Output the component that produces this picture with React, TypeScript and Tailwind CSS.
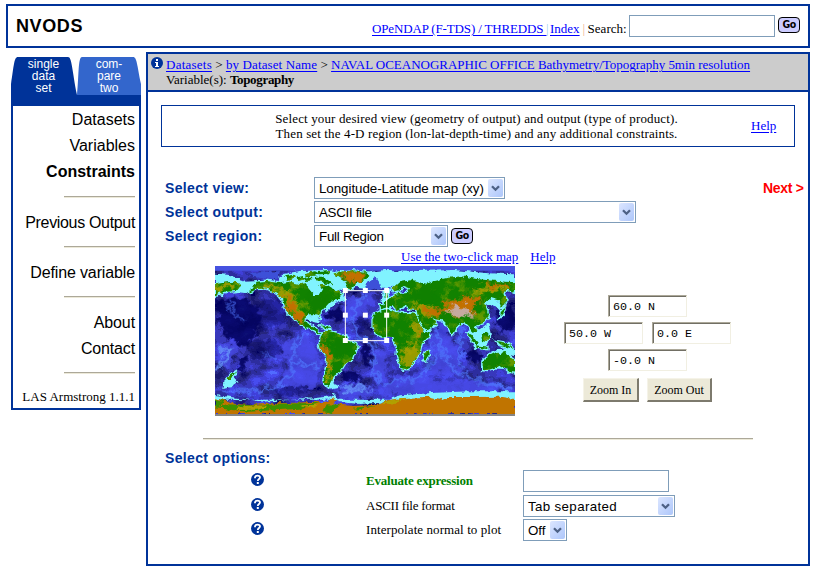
import React from "react";

const serif = "font-['Liberation_Serif',serif]";
const sans = "font-['Liberation_Sans',sans-serif]";
const link = "text-[#0000ff] underline underline-offset-2";

function Chevron() {
  return (
    <svg width="9" height="7" viewBox="0 0 9 7">
      <path d="M1 1.2L4.5 4.7 8 1.2" fill="none" stroke="#4d6185" strokeWidth="2.3" />
    </svg>
  );
}

function Select({ label, className }: { label: string; className: string }) {
  return (
    <div className={`${sans} flex h-[22px] shrink-0 items-center justify-between border border-[#7f9db9] bg-white pr-px pl-1 text-[13.33px] whitespace-nowrap ${className}`}>
      <span className="pt-[2px]">{label}</span>
      <span className="flex h-[18px] w-[15px] shrink-0 items-center justify-center rounded-[2px] bg-linear-to-br from-[#dce6ff] to-[#adc6fa]">
        <Chevron />
      </span>
    </div>
  );
}

function Go() {
  return (
    <button className="flex h-4 w-[22px] shrink-0 items-center justify-center rounded-[4px] border border-black bg-[#ccccff] pb-px font-['DejaVu_Sans_Condensed','DejaVu_Sans',sans-serif] text-[10.5px] leading-none font-bold tracking-[-0.5px]">
      Go
    </button>
  );
}

function Rule({ className }: { className: string }) {
  return <div className={`h-[2px] shrink-0 border-t border-b border-t-[#aca899] border-b-[#ece9d8] ${className}`} />;
}

function InfoIcon() {
  return (
    <svg width="12" height="12" viewBox="0 0 12 12" className="shrink-0">
      <circle cx="6" cy="6" r="6" fill="#003399" />
      <path d="M5 2h2v2H5zM4 5h3v4h1v1H4V9h1V6H4z" fill="#fff" />
    </svg>
  );
}

function QuestionIcon() {
  return (
    <svg width="13" height="13" viewBox="0 0 13 13" className="mb-[3px] shrink-0">
      <circle cx="6.5" cy="6.5" r="6.5" fill="#003399" />
      <path d="M4 5.2V4.6C4 3.2 5 2.7 6.5 2.7S9 3.3 9 4.6C9 6 6.8 6 6.8 7.9" fill="none" stroke="#fff" strokeWidth="1.8" />
      <path d="M5.8 9h2v2h-2z" fill="#fff" />
    </svg>
  );
}

function Coord({ value }: { value: string }) {
  return (
    <div className="h-[22px] w-[79px] border border-t-[#aca899] border-r-[#f1efe2] border-b-[#f1efe2] border-l-[#aca899] bg-white">
      <div className="h-full border-t border-l border-[#716f64] pl-[3px] font-['Liberation_Mono',monospace] text-[11.67px] leading-[20px] whitespace-pre">{value}</div>
    </div>
  );
}

function ZoomButton({ label, className }: { label: string; className: string }) {
  return (
    <button className={`${serif} h-6 border-t border-r-2 border-b-2 border-l border-t-[#f5f3e8] border-r-[#7d7a6d] border-b-[#7d7a6d] border-l-[#f5f3e8] bg-[#ece9d8] pt-px text-[12px] leading-[21px] whitespace-nowrap ${className}`}>
      {label}
    </button>
  );
}

const land = [
  "M15 118 L50 112 80 110 92 122 80 138 45 140 38 150 25 145 15 152Z",
  "M140 110 L170 108 210 115 240 110 270 118 292 114 295 130 312 150 328 150 338 133 330 118 350 116 368 128 395 145 385 162 362 168 347 185 332 200 330 216 322 208 300 208 288 212 286 230 302 241 315 246 328 262 342 264 338 270 320 262 300 250 280 245 262 232 240 208 222 190 218 165 205 150 185 137 165 130 140 132 110 145 128 128Z",
  "M222 94l25-5 8 8-20 8zM258 97l20-4 5 10-18 5zM287 84l28-5 12 6-15 7-26 2zM280 98l22-3 8 10-22 3zM315 95l20 0 22 12 15 14-24-5-15-12-18-2zM325 81l35-3-10 9-22 1z",
  "M372 86 L395 80 430 76 465 80 478 92 470 104 445 113 434 124 424 136 413 130 402 106 388 97Z",
  "M338 262 L355 257 380 265 410 275 412 290 442 297 442 310 430 330 424 346 405 356 394 374 380 386 370 400 362 410 357 426 343 420 341 400 348 370 352 338 335 317 328 297 332 280Z",
  "M328 241l26 4 10 7-20-3zM50 402l12-13 15-9-2 9-16 13z",
  "M495 205 L510 198 540 195 556 201 575 205 600 204 617 208 622 217 635 245 646 262 661 258 655 275 635 296 631 315 626 330 614 345 605 365 590 375 575 372 568 350 560 330 562 310 550 290 548 275 520 275 500 270 488 250 488 225Z",
  "M640 326l15-8 1 15-11 17-7-5z",
  "M508 178 L526 178 528 168 545 156 562 148 592 144 600 130 580 122 568 138 555 141 548 131 570 112 600 106 625 112 650 116 672 108 710 99 755 94 800 102 850 107 915 112 915 140 888 134 880 146 889 168 876 190 867 166 845 160 822 175 829 190 836 213 820 234 796 242 802 260 786 263 776 246 762 230 742 240 732 260 725 268 713 242 696 226 675 223 662 215 678 236 650 256 640 245 624 215 620 195 600 192 588 180 560 195 547 180 532 190 510 196Z",
  "M818 350 L830 335 850 325 865 320 874 330 884 318 896 332 915 345 915 378 905 386 890 374 870 362 845 372 825 376 818 365Z",
  "M775 268l8 0 21 27-5 8zM814 270l18-8 7 9-10 20-13-3zM859 289l18 3 20 6 17 13-22-5-25-8zM798 304l34 4 0 4-33-4zM523 140l7-3 4 20-10 2zM872 202l12-13-2 12-11 13z",
];
const south = "M15 460 L50 467 75 476 120 481 180 475 240 474 300 471 345 471 370 456 377 468 370 478 430 483 490 480 530 466 580 459 650 456 690 465 710 456 800 456 870 455 915 462 V507 H15Z";

function WorldMap() {
  const marks = [406, 466, 530].flatMap((x) => [137, 211, 287].map((y) => [x, y]));
  return (
    <svg width="300" height="150" viewBox="15 63 900 450" className="shrink-0">
      <defs>
        <filter id="rough" x="0" y="0" width="1" height="1" filterUnits="objectBoundingBox" colorInterpolationFilters="sRGB">
          <feTurbulence type="fractalNoise" baseFrequency="0.06" numOctaves="3" seed="4" result="n" />
          <feDisplacementMap in="SourceGraphic" in2="n" scale="16" xChannelSelector="R" yChannelSelector="G" />
        </filter>
        <filter id="sea" x="0" y="0" width="1" height="1" colorInterpolationFilters="sRGB">
          <feTurbulence type="fractalNoise" baseFrequency="0.018 0.024" numOctaves="5" seed="12" />
          <feColorMatrix values="1 0 0 0 0  1 0 0 0 0  1 0 0 0 0  0 0 0 0 1" />
          <feComponentTransfer>
            <feFuncR type="discrete" tableValues="0 0 0.1 0.15 0.18 0.22 0.25 0.28 0.32 0.4" />
            <feFuncG type="discrete" tableValues="0 0 0.1 0.15 0.18 0.22 0.25 0.3 0.42 0.55" />
            <feFuncB type="discrete" tableValues="0.36 0.38 0.44 0.5 0.62 0.74 0.85 0.94 1 1" />
          </feComponentTransfer>
        </filter>
        <filter id="relief" x="0" y="0" width="1" height="1" colorInterpolationFilters="sRGB">
          <feTurbulence type="fractalNoise" baseFrequency="0.03" numOctaves="4" seed="7" />
          <feColorMatrix values="0 0 0 0 0.5  0 0 0 0 0.63  0 0 0 0 0  0 0 0 4 -2" />
        </filter>
        <filter id="soft" x="-0.1" y="-0.1" width="1.2" height="1.2" colorInterpolationFilters="sRGB">
          <feTurbulence type="fractalNoise" baseFrequency="0.05" numOctaves="4" seed="9" result="n" />
          <feGaussianBlur in="SourceGraphic" stdDeviation="3" result="b" />
          <feDisplacementMap in="b" in2="n" scale="45" xChannelSelector="R" yChannelSelector="G" />
        </filter>
        <clipPath id="ground">
          {land.map((d) => <path key={d} d={d} />)}
        </clipPath>
      </defs>
      <rect x="15" y="63" width="900" height="450" filter="url(#sea)" />
      <g filter="url(#soft)">
        <g fill="#00005c" opacity="0.85">
          <path d="M20 165l75-5 50 30 10 50-50 70-40-20-45-60zM340 195l55-10 5 40-40 5zM385 375l50 5 30 30-65-5zM855 195l55-15 5 70-50 10zM760 315l60 10-10 30-50-20zM455 300l25 5-2 60-20-10zM90 335l22 0-8 45-20 0z" />
          <path d="M100 300l90-20 35 40-80 30zM165 430l120-15 30 20-90 20zM100 180l110-20 30 60-80 40zM440 225l35-15-5 45-25 10z" opacity="0.5" />
        </g>
        <g fill="#4a4cee" opacity="0.8">
          <path d="M215 290l70-30 45 60 10 70-30 40-120-5 40-50zM400 165l70-25 30 10-40 60-45 30zM490 300l40 20 0 80-40 20zM650 270l50-40 30 50 30 100-90 10zM560 380l120 20 200 20 30 20-300 20-100-15zM380 425l90-10 30 40-110 15zM20 290l70 10-20 60-50 10z" />
        </g>
        <g fill="none" stroke="#5078ff" strokeWidth="9" opacity="0.85">
          <path d="M275 260L250 320 248 385 205 425 110 440 30 438M250 350L335 365M460 150L425 215 440 275 493 300 493 380 510 420M675 225L690 310 740 385 900 430M690 330L620 400 520 415M752 240V360" />
          <path d="M60 165L65 200 110 235M160 325l40 18M670 300l-20 60M790 410l110 25" strokeWidth="6" />
          <path d="M22 310l35 10-15 30-22 20M385 428l80-6 8 14-70 0" stroke="#6ea8ff" strokeWidth="8" />
        </g>
      </g>
      <path d="M15 63H915V77H15Z" fill="#4652e0" />
      <g filter="url(#rough)">
        <g fill="#80f3ff">
          <path d="M15 86L60 90 105 107 170 104 205 108 215 88 270 78 355 75 380 82 405 117 438 121 475 82 525 75 625 78 735 75 835 85 915 88V125H550L490 131 440 126 390 134 300 152 290 120H15Z" />
          <path d="M285 212l36-3 12 22-14 2-24-6zM75 118l45-6 25 20-38 12-30-4zM385 140l15 5 8 20-28 8-33 30-4-12 30-30zM358 405l10-15 12 0-10 25 20 10-32 6-12-8zM775 260l35-8 25-18 8 35-15 35-35 5zM815 178l35-18 32 22 5 35-35-35zM520 135l25-5-5 25 20 0-30 20-18-10zM44 405l28-28 10 5-8 22 12 6-22 16-24 6zM870 305l45 8v20l-25-5zM815 345l45-30 30 0 25 30v45l-28-15-60-2-15 10zM15 450l55 7 90 13 150-10 52-6 10-8 14 25 64 6 60-4 60-22 110-8 100-4h160v25H15Z" />
        </g>
        <path d="M120 84L210 78 205 103 170 101 130 96ZM462 122l35-25 20 30-45 14z" fill="#3d50d8" />
        <g fill="#118200" stroke="#80f3ff" strokeWidth="8" paintOrder="stroke">
          {land.map((d) => <path key={d} d={d} />)}
        </g>
        <g clipPath="url(#ground)">
          <rect x="15" y="63" width="900" height="450" filter="url(#relief)" opacity="0.75" />
          <g filter="url(#soft)">
            <path d="M165 110L205 128 250 145 278 195 283 240 267 235 225 183 205 140 160 125ZM15 120l65-5 0 12-65 15zM600 300l28-10-8 50-20 30-20-10-5-48zM612 225l35 30-25 35-15-40zM600 180l60 0 35 40-60-8zM735 145l160-5 0-20-60 0-50 20zM332 275l20 55 15 10-10 70-12 0 5-75-22-45z" fill="#b0a000" opacity="0.85" />
            <path d="M225 155l25 5 28 50 0 30-15-10-35-45zM385 85l65-5 20 17-42 25-18-18zM632 185l55 12 20-20 55-18 50-10-5 25-25 20 25 12-70 8-35-22-15 25-40-8zM333 265l5 35 25 30-5 50-7-35-20-25zM625 245l8 15-8 25zM830 115l65 5 0 12-60-8z" fill="#c27000" />
            <path d="M706 193l45-9 30 12 10 18-35 3-35-15z" fill="#c6aaa0" />
            <path d="M360 275l40 0 30 30-25 30-35-15zM500 250l50 15 20 30-35-10zM590 145l60-20 30 10 0 50-60-5zM300 145l65 15-25 32-45 10z" fill="#108000" />
          </g>
        </g>
        <path d={south} fill="#c07400" />
        <path d="M50 478l95 4 70-6 120-3-70 18-70 5-80 4-100-10zM15 462l30 6-20 20-10-5zM350 478l40 2-25 24-25-5zM430 488l70-6-60 12z" fill="#3c9000" />
        <path d="M90 484l85-2-30 12-70 1zM270 481l60-2-20 10zM500 478l40-12 60-8-55 18z" fill="#b0a000" />
      </g>
      <path d="M15 507H915V513H15Z" fill="#858585" />
      <path d="M406 137H530V287H406Z" fill="none" stroke="#fff" strokeWidth="3" />
      {marks.map(([x, y]) => <rect key={`${x}-${y}`} x={x - 7.5} y={y - 8} width="15" height="15" fill="#fff" />)}
    </svg>
  );
}

function Sidebar() {
  return (
    <aside className="mt-[9px] ml-[11px] flex w-[130px] shrink-0 flex-col self-start">
      <div className={`${sans} grid grid-cols-1`}>
        <svg width="130" height="38" viewBox="0 0 130 38" className="col-start-1 row-start-1">
          <path d="M66 38C68 18 67 0 71 0H122C126 0 126 8 130 27V38Z" fill="#3366cc" />
          <path d="M0 38V27C3 8 3 0 7 0H57C61 0 61 13 66 38Z" fill="#003399" />
        </svg>
        <div className="col-start-1 row-start-1 grid grid-cols-2 text-center text-[12px] leading-3 text-white">
          <div className="pt-px">single<br />data<br />set</div>
          <div className="pt-px pl-px">com-<br />pare<br />two</div>
        </div>
      </div>
      <div className={`${sans} flex h-[315px] flex-col items-end border-2 border-t-[11px] border-[#003399] pt-px pr-1 text-[16px] leading-[26px] whitespace-nowrap`}>
        <div>Datasets</div>
        <div>Variables</div>
        <div className="font-bold">Constraints</div>
        <Rule className="mt-[11px] w-[71px]" />
        <div className="mt-3 tracking-[-0.33px]">Previous Output</div>
        <Rule className="mt-[10px] w-[71px]" />
        <div className="mt-3 tracking-[-0.13px]">Define variable</div>
        <Rule className="mt-[10px] w-[71px]" />
        <div className="mt-3 tracking-[-0.1px]">About</div>
        <div className="tracking-[-0.15px]">Contact</div>
        <Rule className="mt-[10px] w-[71px]" />
        <div className={`${serif} mt-[15px] text-[13px] leading-4`}>LAS Armstrong 1.1.1</div>
      </div>
    </aside>
  );
}

const fieldLabel = `${sans} w-[149px] shrink-0 text-[14px] font-bold tracking-[0.35px] text-[#003399]`;

export default function App() {
  return (
    <div className={`${serif} h-[572px] w-[815px] overflow-hidden bg-white pt-1 text-[13px] leading-4 whitespace-nowrap text-black`}>
      <header className="ml-[6px] flex h-11 w-[804px] border-2 border-[#003399]">
        <h1 className={`${sans} ml-2 w-[356px] pt-[10px] text-[18px] leading-5 font-bold tracking-[0.6px]`}>NVODS</h1>
        <div className="flex w-[257px] pt-[15px]">
          <a className={`${link} w-[174px] tracking-[-0.15px] whitespace-pre`}>OPeNDAP (F-TDS) / THREDDS </a>
          <span className="w-1 text-[#a0d0f0]">|</span>
          <a className={`${link} mr-[3px]`}>Index</a>
          <span className="w-[5px] text-[#f0b090]">|</span>
          <span>Search:</span>
        </div>
        <div className="mt-[9px] h-[22px] w-[146px] shrink-0 border border-[#7f9db9]" />
        <div className="mt-[11px] ml-[3px]"><Go /></div>
      </header>

      <div className="flex">
        <Sidebar />
        <main className="mt-1 ml-[5px] h-[514px] w-[664px] shrink-0 border-2 border-[#003399]">
          <div className="flex h-[38px] border-b-2 border-[#003399] bg-[#cccccc] pt-[3px] pl-[3px] leading-[15px]">
            <InfoIcon />
            <div className="ml-[3px]">
              <div>
                <a className={`${link} tracking-[0.25px]`}>Datasets</a> &gt; <a className={`${link} tracking-[0.12px]`}>by Dataset Name</a> &gt; <a className={`${link} tracking-[-0.02px]`}>NAVAL OCEANOGRAPHIC OFFICE Bathymetry/Topography 5min resolution</a>
              </div>
              <div>Variable(s): <b className="tracking-[-0.33px]">Topography</b></div>
            </div>
          </div>

          <div className="mt-[13px] ml-[13px] flex h-[42px] w-[634px] items-center border border-[#003399]">
            <div className="ml-[40px] w-[549px] text-center leading-[15px] tracking-[0.13px]">
              Select your desired view (geometry of output) and output (type of product).<br />
              Then set the 4-D region (lon-lat-depth-time) and any additional constraints.
            </div>
            <a className={link}>Help</a>
          </div>

          <div className="mt-[30px] ml-[17px] flex flex-col gap-[2px]">
            <div className="flex items-center">
              <div className={fieldLabel}>Select view:</div>
              <Select label="Longitude-Latitude map (xy)" className="w-[191px] tracking-[-0.04px]" />
              <div className={`${sans} ml-[258px] text-[14px] font-bold tracking-[-0.3px] text-[#ff0000]`}>Next &gt;</div>
            </div>
            <div className="flex items-center">
              <div className={fieldLabel}>Select output:</div>
              <Select label="ASCII file" className="w-[322px] tracking-[-0.3px]" />
            </div>
            <div className="flex items-center">
              <div className={fieldLabel}>Select region:</div>
              <Select label="Full Region" className="mr-[3px] w-[134px] tracking-[-0.25px]" />
              <Go />
            </div>
          </div>
          <div className="mt-[2px] ml-[253px] flex h-[17px]">
            <a className={link}>Use the two-click map</a>
            <a className={`${link} ml-3`}>Help</a>
          </div>

          <div className="ml-[67px] flex h-[150px]">
            <WorldMap />
            <div className="mt-[29px] ml-[49px] flex w-[167px] flex-col items-center gap-[5px]">
              <Coord value="60.0 N" />
              <div className="flex gap-[9px]"><Coord value="50.0 W" /><Coord value="0.0 E" /></div>
              <Coord value="-0.0 N" />
              <div className="mt-[2px] flex gap-2"><ZoomButton label="Zoom In" className="w-[56px]" /><ZoomButton label="Zoom Out" className="w-[65px]" /></div>
            </div>
          </div>

          <Rule className="mt-[22px] ml-[55px] w-[550px]" />
          <div className={`${fieldLabel} mt-[10px] ml-[17px]`}>Select options:</div>
          <div className="mt-1 ml-[103px]">
            <div className="mb-[3px] flex items-center">
              <QuestionIcon />
              <div className="ml-[102px] w-[157px] font-bold tracking-[-0.2px] text-[#008000]">Evaluate expression</div>
              <div className="h-[22px] w-[146px] border border-[#7f9db9]" />
            </div>
            <div className="mb-[2px] flex items-center">
              <QuestionIcon />
              <div className="ml-[102px] w-[157px] tracking-[-0.23px]">ASCII file format</div>
              <Select label="Tab separated" className="w-[152px] tracking-[0.35px]" />
            </div>
            <div className="flex items-center">
              <QuestionIcon />
              <div className="ml-[102px] w-[157px] tracking-[0.08px]">Interpolate normal to plot</div>
              <Select label="Off" className="w-[44px]" />
            </div>
          </div>
        </main>
      </div>
    </div>
  );
}
